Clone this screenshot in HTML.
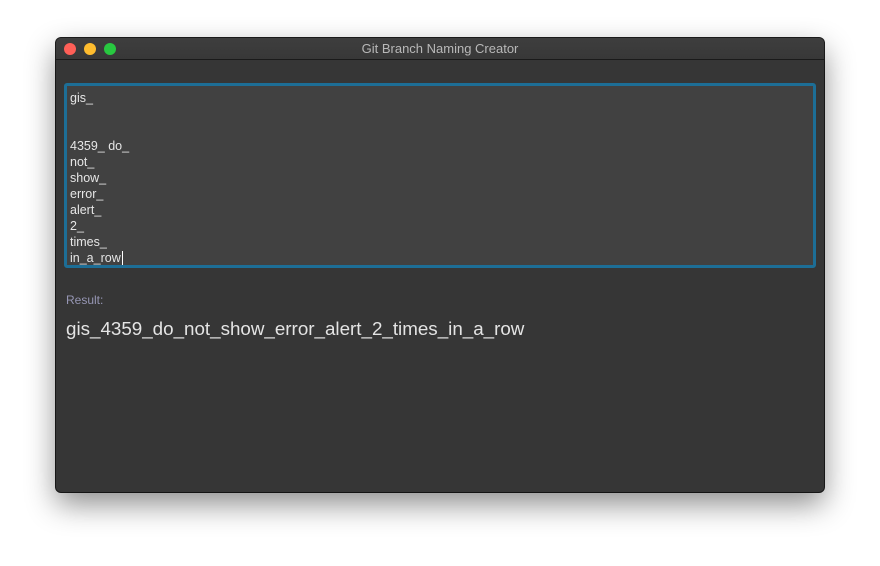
<!DOCTYPE html>
<html><head><style>
body{margin:0;width:880px;height:566px;background:#fff;position:relative;overflow:hidden;font-family:"Liberation Sans",sans-serif}
.win{position:absolute;left:56px;top:38px;width:768px;height:454px;background:#363636;border-radius:5px;box-shadow:0 12px 30px rgba(0,0,0,.45),0 0 0 1px #1e1e1e;overflow:hidden}
.tb{height:21px;background:linear-gradient(#3e3e3e,#383838);border-bottom:1px solid #1a1a1a;color:#b8b8b8;font-size:13px;text-align:center;line-height:22px}
.d{position:absolute;top:5px;width:12px;height:12px;border-radius:50%}
.ta{position:absolute;box-sizing:border-box;left:8px;top:45px;width:752px;height:185px;border:3px solid #1d6e96;border-radius:3px;background:#414141;color:#e6e6e6;font-size:12.5px;line-height:16px;padding:4px 0 0 3px}
.lbl{position:absolute;left:10px;top:255px;color:#9696b4;font-size:12px}
.res{position:absolute;left:10px;top:280px;color:#e4e4e4;font-size:18.8px}
</style></head><body>
<div class="win">
<div class="tb">Git Branch Naming Creator</div>
<div class="d" style="left:8px;background:#fe5f57"></div>
<div class="d" style="left:28px;background:#febc2e"></div>
<div class="d" style="left:48px;background:#28c840"></div>
<div class="ta">gis_<br><br><br>4359_ do_<br>not_<br>show_<br>error_<br>alert_<br>2_<br>times_<br>in_a_row<span style="border-left:1px solid #fff;margin-left:1px"></span></div>
<div class="lbl">Result:</div>
<div class="res">gis_4359_do_not_show_error_alert_2_times_in_a_row</div>
</div>
</body></html>
